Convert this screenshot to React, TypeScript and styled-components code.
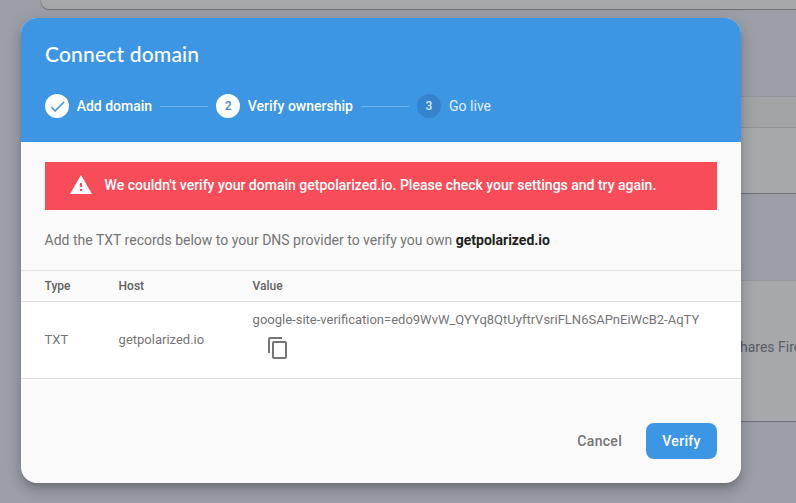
import React from "react";
import styled, { createGlobalStyle, css } from "styled-components";

const GlobalStyle = createGlobalStyle`
  *, *::before, *::after { box-sizing: border-box; }
  html, body { margin: 0; height: 100%; overflow: hidden; }
  body { font-family: Roboto, "Noto Sans", sans-serif; -webkit-font-smoothing: antialiased; }
`;

const Page = styled.div`
  position: relative;
  width: 796px;
  height: 503px;
  overflow: hidden;
  background: #9c9fa8;
`;

const Backdrop = styled.div`
  display: flex;
  flex-direction: column;
  padding-left: 41px;
`;

const BackCard = styled.section<{ $height: number; $gap: number; $first?: boolean }>`
  flex: none;
  width: 900px;
  height: ${(p) => p.$height}px;
  margin-bottom: ${(p) => p.$gap}px;
  overflow: hidden;
  border-radius: ${(p) => (p.$first ? "0 0 8px 8px" : "8px")};
  background: #a7a8ab;
  box-shadow: 0 1px 1px rgba(0, 0, 0, 0.25), 0 0 1px 1px rgba(0, 0, 0, 0.07);
`;

const BackCardHeader = styled.div`
  height: 31px;
  border-bottom: 1px solid #929395;
  background: #a3a4a6;
`;

const BackText = styled.p`
  margin: 0;
  padding: 56px 0 0 699px;
  font-size: 14px;
  line-height: 20px;
  white-space: nowrap;
  color: #595e67;
`;

const Dialog = styled.div`
  position: absolute;
  top: 18px;
  left: 21px;
  display: flex;
  flex-direction: column;
  width: 720px;
  height: 465px;
  overflow: hidden;
  border-radius: 16px;
  background: #fafafa;
  box-shadow:
    0 5px 6px -3px rgba(0, 0, 0, 0.18),
    0 9px 12px 1px rgba(0, 0, 0, 0.1),
    0 3px 16px 2px rgba(0, 0, 0, 0.1);
`;

const Header = styled.header`
  flex: none;
  height: 124px;
  padding: 22px 24px 0;
  background: #3c96e4;
  color: #fff;
`;

const Title = styled.h1`
  margin: 0 0 26px;
  font: 500 21px/28px Lato, sans-serif;
  letter-spacing: 0.18px;
`;

const Steps = styled.ol`
  display: flex;
  align-items: center;
  margin: 0;
  padding: 0;
  list-style: none;
`;

const Step = styled.li<{ $upcoming?: boolean }>`
  display: flex;
  align-items: center;
  height: 24px;
  font-size: 14px;
  font-weight: ${(p) => (p.$upcoming ? 400 : 500)};
  white-space: nowrap;
  color: ${(p) => (p.$upcoming ? "#e3f0fb" : "#fff")};
`;

const StepMark = styled.span<{ $upcoming?: boolean }>`
  display: flex;
  align-items: center;
  justify-content: center;
  width: 24px;
  height: 24px;
  margin-right: ${(p) => (p.$upcoming ? 8.2 : 7.7)}px;
  border-radius: 50%;
  font-size: 12px;
  font-weight: 500;
  ${(p) =>
    p.$upcoming
      ? css`background: #3583ce; color: #dcebf9;`
      : css`background: #fff; color: #3c88cd;`}
`;

const Connector = styled.li`
  width: 48px;
  height: 1px;
  margin: 0 8px;
  background: #6fb1eb;
`;

const Alert = styled.div`
  display: flex;
  flex: none;
  align-items: center;
  height: 48px;
  margin: 20px 24px 0;
  padding: 0 24px 2px 23.6px;
  gap: 12px;
  background: #f84d58;
  color: #fff;
  font-size: 14px;
  font-weight: 500;
  white-space: nowrap;
`;

const Instructions = styled.p`
  flex: none;
  margin: 20px 24px 20px 23.6px;
  font-size: 14px;
  line-height: 20px;
  white-space: nowrap;
  color: #757575;
`;

const Domain = styled.strong`
  font-weight: 700;
  color: #212121;
`;

const Record = styled.div`
  display: grid;
  flex: none;
  grid-template-columns: 74px 134px 1fr;
  align-items: center;
  padding: 0 24px 0 23.6px;
  border-bottom: 1px solid #e0e0e0;
`;

const RecordHead = styled(Record)`
  height: 32px;
  border-top: 1px solid #e4e4e4;
  font-size: 12px;
  font-weight: 500;
  color: #616161;
`;

const RecordRow = styled(Record)`
  height: 77px;
  padding-bottom: 1px;
  background: #fff;
  font-size: 13px;
  white-space: nowrap;
  color: #757575;
`;

const ValueCell = styled.div`
  display: flex;
  flex-direction: column;
  align-items: flex-start;
  padding-bottom: 7px;
`;

const CopyButton = styled.button`
  display: flex;
  margin: 9px 0 0 13.4px;
  padding: 0;
  border: 0;
  background: none;
  color: #757575;
`;

const Actions = styled.footer`
  display: flex;
  justify-content: flex-end;
  gap: 8px;
  margin-top: auto;
  padding: 24px;
`;

const Button = styled.button<{ $primary?: boolean }>`
  height: 36px;
  min-width: 71px;
  padding: 0 16px;
  border: 0;
  border-radius: 8px;
  background: ${(p) => (p.$primary ? "#3c96e4" : "transparent")};
  color: ${(p) => (p.$primary ? "#fff" : "#757575")};
  font: 500 14px/36px Roboto, sans-serif;
  letter-spacing: 0.3px;
`;

const CheckIcon = () => (
  <svg width="19" height="19" viewBox="0 0 24 24" fill="#3c96e4">
    <path d="M9 16.2 4.8 12l-1.4 1.4L9 19 21 7l-1.4-1.4z" />
  </svg>
);

const WarningIcon = () => (
  <svg width="24" height="24" viewBox="0 0 24 24" fill="currentColor">
    <path d="M1 21h22L12 2 1 21zm12-3h-2v-2h2v2zm0-4h-2v-4h2v4z" />
  </svg>
);

const CopyIcon = () => (
  <svg width="24" height="24" viewBox="0 0 24 24" fill="currentColor">
    <path d="M16 1H4c-1.100 0-2 .9-2 2v14h2V3h12V1zm3 4H8c-1.100 0-2 .9-2 2v14c0 1.100.9 2 2 2h11c1.100 0 2-.9 2-2V7c0-1.100-.9-2-2-2zm0 16H8V7h11v14z" />
  </svg>
);

export default function App() {
  return (
    <Page>
      <GlobalStyle />
      <Backdrop>
        <BackCard $height={9} $gap={88} $first />
        <BackCard $height={96} $gap={88}>
          <BackCardHeader />
        </BackCard>
        <BackCard $height={140} $gap={0}>
          <BackText>hares Fire</BackText>
        </BackCard>
      </Backdrop>
      <Dialog role="dialog" aria-labelledby="dialog-title">
        <Header>
          <Title id="dialog-title">Connect domain</Title>
          <Steps>
            <Step>
              <StepMark><CheckIcon /></StepMark>
              Add domain
            </Step>
            <Connector aria-hidden />
            <Step>
              <StepMark>2</StepMark>
              Verify ownership
            </Step>
            <Connector aria-hidden />
            <Step $upcoming>
              <StepMark $upcoming>3</StepMark>
              Go live
            </Step>
          </Steps>
        </Header>
        <Alert role="alert">
          <WarningIcon />
          <span>We couldn't verify your domain getpolarized.io. Please check your settings and try again.</span>
        </Alert>
        <Instructions>
          Add the TXT records below to your DNS provider to verify you own <Domain>getpolarized.io</Domain>
        </Instructions>
        <RecordHead>
          <span>Type</span>
          <span>Host</span>
          <span>Value</span>
        </RecordHead>
        <RecordRow>
          <span>TXT</span>
          <span>getpolarized.io</span>
          <ValueCell>
            <span>google-site-verification=edo9WvW_QYYq8QtUyftrVsriFLN6SAPnEiWcB2-AqTY</span>
            <CopyButton aria-label="Copy value"><CopyIcon /></CopyButton>
          </ValueCell>
        </RecordRow>
        <Actions>
          <Button>Cancel</Button>
          <Button $primary>Verify</Button>
        </Actions>
      </Dialog>
    </Page>
  );
}
